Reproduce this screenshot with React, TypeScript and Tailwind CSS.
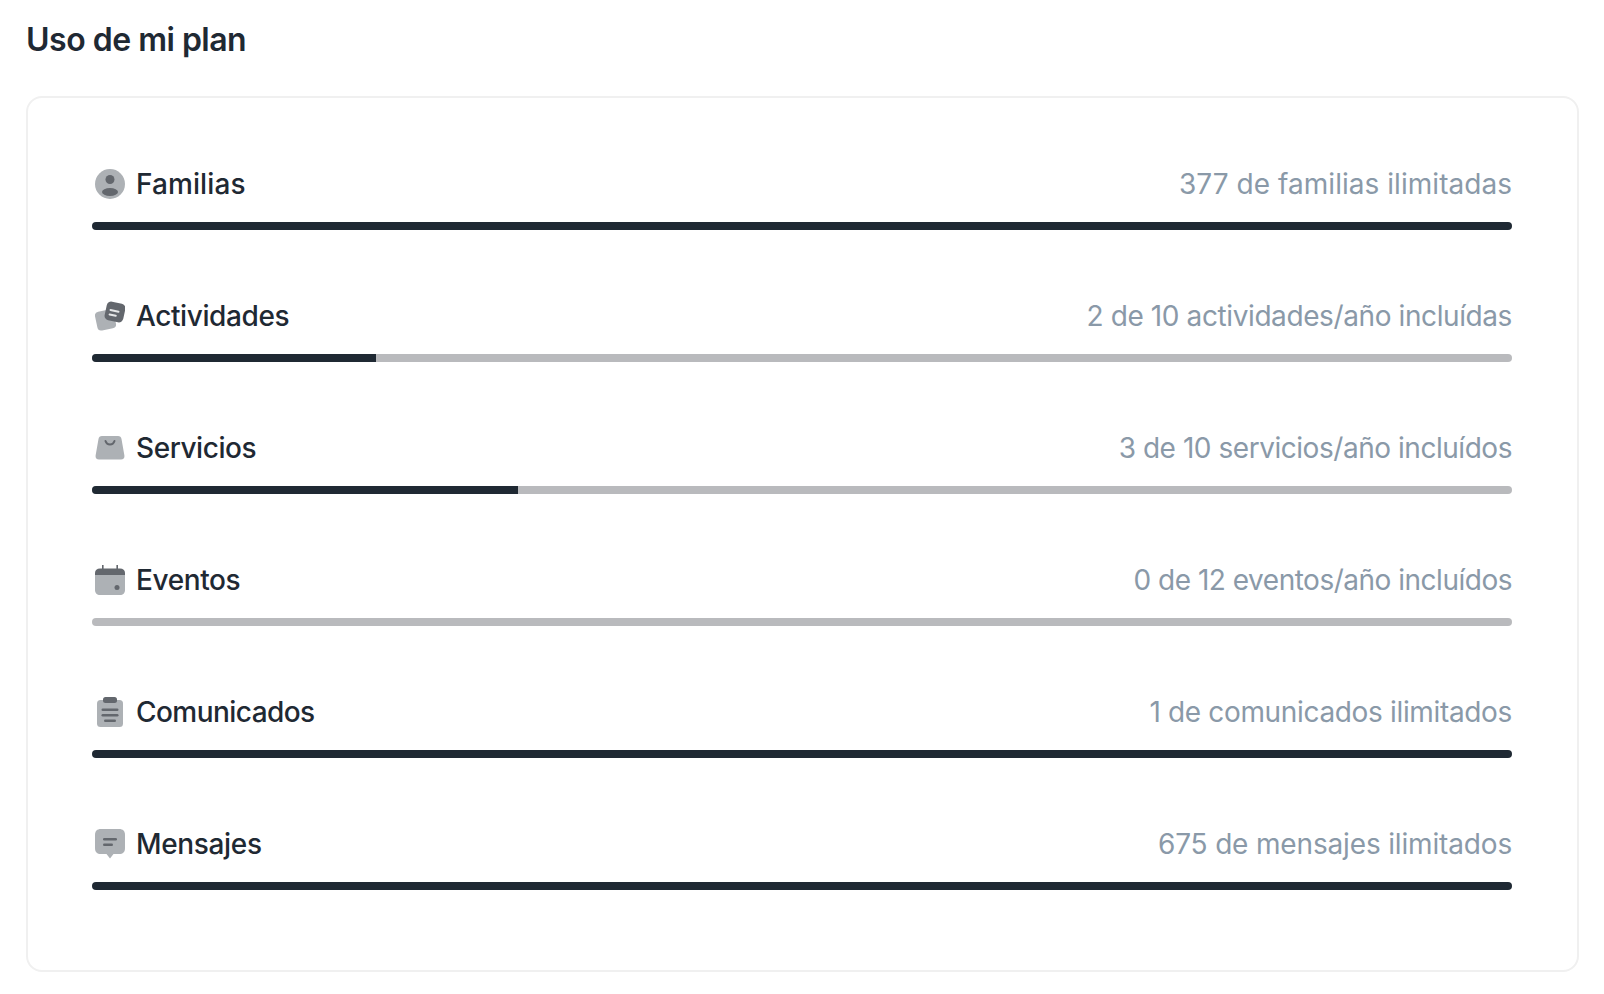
import React from 'react';

const light = '#adb1b5';
const dark = '#63676d';

const FamiliasIcon = () => (
  <svg width="30" height="30" viewBox="0 0 30 30">
    <circle cx="15" cy="15" r="15" fill={light} />
    <circle cx="15" cy="10.5" r="4.5" fill={dark} />
    <ellipse cx="15" cy="23" rx="8" ry="4" fill={dark} />
  </svg>
);

const ActividadesIcon = () => (
  <svg width="30" height="30" viewBox="0 0 30 30">
    <rect x="1" y="9.5" width="19" height="19" rx="4" fill={light} transform="rotate(-12 10.5 19)" />
    <rect x="10.5" y="1.5" width="19" height="19" rx="4.5" fill={dark} transform="rotate(12 20 11)" />
    <path d="M15.5 9 23.5 10.7M14.6 13.4 20.8 14.7" stroke="#e6e7e8" strokeWidth="2" strokeLinecap="round" fill="none" />
  </svg>
);

const ServiciosIcon = () => (
  <svg width="30" height="30" viewBox="0 0 30 30">
    <path d="M7 3H23C25 3 26.2 4.2 26.5 6L29.4 22.5C29.8 25 28.3 26.5 26 26.5H4C1.7 26.5.2 25 .6 22.5L3.5 6C3.8 4.2 5 3 7 3Z" fill={light} />
    <path d="M10.5 8C11.3 10.5 13 11.5 15 11.5S18.7 10.5 19.5 8" stroke={dark} strokeWidth="2" strokeLinecap="round" fill="none" />
  </svg>
);

const EventosIcon = () => (
  <svg width="30" height="30" viewBox="0 0 30 30">
    <path d="M0 10H30V25C30 28 28 30 25 30H5C2 30 0 28 0 25Z" fill={light} />
    <path d="M0 10V8C0 5 2 3.5 5 3.5H7V0H8.6V3.5H21.4V0H23V3.5H25C28 3.5 30 5 30 8V10Z" fill={dark} />
    <circle cx="22" cy="22.5" r="2.5" fill={dark} />
  </svg>
);

const ComunicadosIcon = () => (
  <svg width="30" height="30" viewBox="0 0 30 30">
    <rect x="2" y="3" width="26" height="27" rx="3.5" fill={light} />
    <rect x="8" y="0" width="14" height="6" rx="2.5" fill={dark} />
    <rect x="6.5" y="11.5" width="17" height="2.5" rx="1.25" fill={dark} />
    <rect x="6.5" y="17" width="17" height="2.5" rx="1.25" fill={dark} />
    <rect x="9" y="22.5" width="12" height="2.5" rx="1.25" fill={dark} />
  </svg>
);

const MensajesIcon = () => (
  <svg width="30" height="30" viewBox="0 0 30 30">
    <path d="M6 0H24C28 0 30 2 30 6V19C30 23 28 25 24 25H18.5L15 29.5 11.5 25H6C2 25 0 23 0 19V6C0 2 2 0 6 0Z" fill={light} />
    <rect x="8" y="9" width="14" height="2.5" rx="1.25" fill={dark} />
    <rect x="8" y="14.5" width="10" height="2.5" rx="1.25" fill={dark} />
  </svg>
);

const rows = [
  { name: 'Familias', nameTracking: 'tracking-[0.1px]', usage: '377 de familias ilimitadas', fill: 'w-full', tracking: 'tracking-[0.04px]', Icon: FamiliasIcon },
  { name: 'Actividades', nameTracking: 'tracking-[-0.4px]', usage: '2 de 10 actividades/año incluídas', fill: 'w-[20%]', tracking: 'tracking-[-0.4px]', Icon: ActividadesIcon },
  { name: 'Servicios', nameTracking: 'tracking-[-0.45px]', usage: '3 de 10 servicios/año incluídos', fill: 'w-[30%]', tracking: 'tracking-[-0.46px]', Icon: ServiciosIcon },
  { name: 'Eventos', nameTracking: 'tracking-[-0.4px]', usage: '0 de 12 eventos/año incluídos', fill: 'w-0', tracking: 'tracking-[-0.49px]', Icon: EventosIcon },
  { name: 'Comunicados', nameTracking: 'tracking-[-0.55px]', usage: '1 de comunicados ilimitados', fill: 'w-full', tracking: 'tracking-[-0.34px]', Icon: ComunicadosIcon },
  { name: 'Mensajes', nameTracking: 'tracking-[-0.35px]', usage: '675 de mensajes ilimitados', fill: 'w-full', tracking: 'tracking-[-0.16px]', Icon: MensajesIcon },
];

export default function App() {
  return (
    <div className="min-h-[994px] bg-white pl-[26px] pr-[25px] pt-[16px] font-['Inter',sans-serif] text-[#1f2933]">
      <h1 className="mb-[32px] text-[32px] font-semibold leading-[48px] tracking-[-0.5px]">Uso de mi plan</h1>
      <div className="flex flex-col gap-[64px] rounded-[16px] border-2 border-[#f0f0f0] pb-[80px] pl-[64px] pr-[65px] pt-[64px]">
        {rows.map(({ name, nameTracking, usage, fill, tracking, Icon }) => (
          <div key={name}>
            <div className="mb-[18px] flex h-[42px] items-center justify-between">
              <div className="flex items-center gap-[11px] pl-[3px]">
                <div className="mt-[2px]">
                  <Icon />
                </div>
                <span className={`pt-[2px] text-[28px] font-medium ${nameTracking}`}>{name}</span>
              </div>
              <span className={`pt-[2px] text-[28px] text-[#8a99a8] ${tracking}`}>{usage}</span>
            </div>
            <div className="h-[8px] overflow-hidden rounded-full bg-[#b9babd]">
              <div className={`h-full bg-[#1f2933] ${fill}`} />
            </div>
          </div>
        ))}
      </div>
    </div>
  );
}
